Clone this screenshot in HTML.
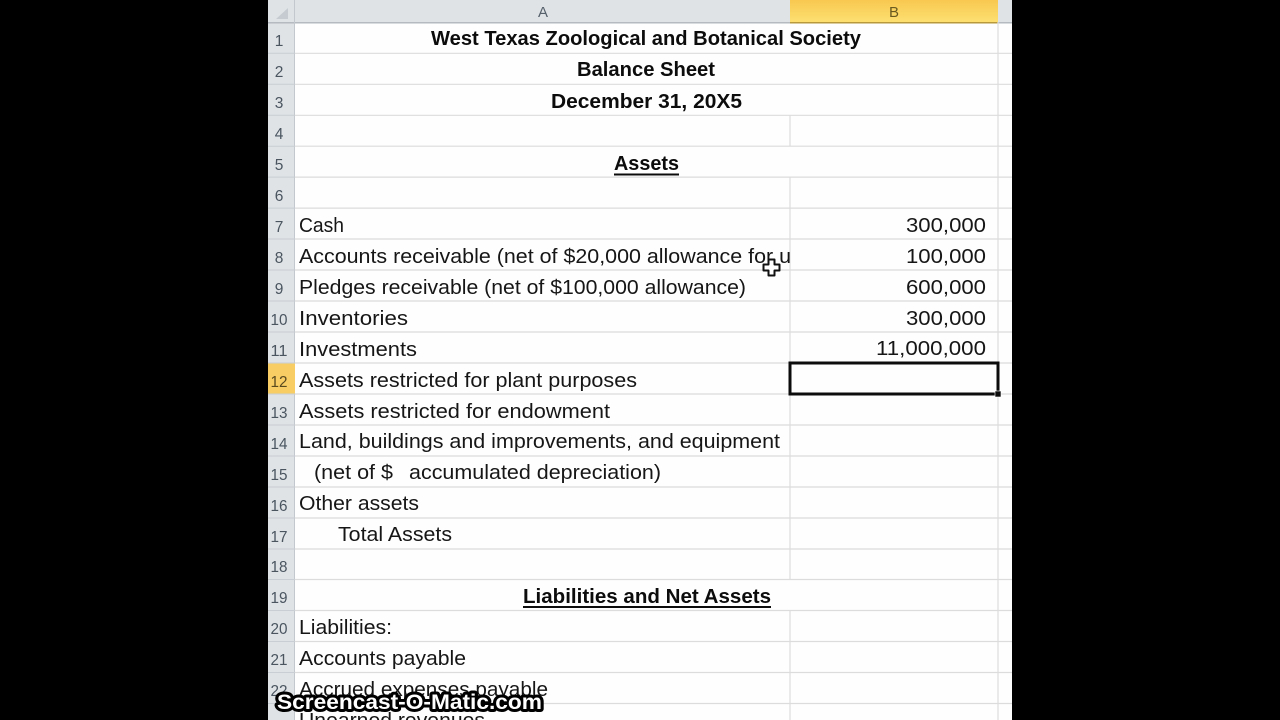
<!DOCTYPE html>
<html><head><meta charset="utf-8"><style>
html,body{margin:0;padding:0;background:#000;width:1280px;height:720px;overflow:hidden}
svg{display:block;position:absolute;left:0;top:0;filter:blur(.35px)}
text{font-family:"Liberation Sans",sans-serif}
.t{font-size:20.5px;fill:#161616}
.b{font-size:20.5px;font-weight:bold;fill:#0c0c0c}
.n{font-size:15.5px;fill:#4a5560;text-anchor:middle}
.h{font-size:15px;fill:#55606a;text-anchor:middle}
.g{stroke:#dcdcdc;stroke-width:1.2;fill:none}
</style></head><body>
<svg width="1280" height="720" viewBox="0 0 1280 720" xmlns="http://www.w3.org/2000/svg">
<defs>
<linearGradient id="y" x1="0" y1="0" x2="0" y2="1"><stop offset="0" stop-color="#f8c850"/><stop offset="1" stop-color="#fde071"/></linearGradient>
<clipPath id="c"><rect x="295" y="0" width="495" height="720"/></clipPath>
</defs>
<rect width="1280" height="720" fill="#000"/>
<rect x="268" y="0" width="744" height="720" fill="#fefefe"/>
<!-- headers -->
<rect x="268" y="0" width="744" height="22" fill="#dfe3e6"/>
<rect x="268" y="22" width="27" height="698" fill="#dfe3e6"/>
<rect x="790" y="0" width="208" height="22" fill="url(#y)"/>
<rect x="268" y="22" width="744" height="1.5" fill="#b4babf"/>
<rect x="790" y="22" width="208" height="1.5" fill="#b89a3c"/>
<polygon points="288,8 288,19 276,19" fill="#c5cbd0"/>
<rect x="294" y="0" width="1" height="720" fill="#c2c8cd"/>
<text class="h" x="543" y="17">A</text>
<text class="h" x="894" y="17" style="fill:#6a5a20">B</text>
<!-- row 12 header -->
<rect x="268" y="363" width="27" height="31" fill="#f8cd63"/>
<!-- horizontal gridlines -->
<g class="g">
<path d="M295 53.3H1012M295 84.3H1012M295 115.3H1012M295 146.2H1012M295 177.1H1012M295 208.1H1012M295 239H1012M295 270H1012M295 301H1012M295 332H1012M295 363H1012M295 394H1012M295 425H1012M295 456H1012M295 487H1012M295 518H1012M295 549H1012M295 579.5H1012M295 610.5H1012M295 641.5H1012M295 672.5H1012M295 703.5H1012"/>
<path d="M790 115.3V146M790 177.1V579.5M790 610.5V720M998 22V720"/>
</g>
<g stroke="#c8ced3" stroke-width="1">
<path d="M268 53.3H295M268 84.3H295M268 115.3H295M268 146.2H295M268 177.1H295M268 208.1H295M268 239H295M268 270H295M268 301H295M268 332H295M268 363H295M268 394H295M268 425H295M268 456H295M268 487H295M268 518H295M268 549H295M268 579.5H295M268 610.5H295M268 641.5H295M268 672.5H295M268 703.5H295"/>
</g>
<!-- row numbers -->
<text class="n" x="279" y="46">1</text>
<text class="n" x="279" y="77">2</text>
<text class="n" x="279" y="108">3</text>
<text class="n" x="279" y="139">4</text>
<text class="n" x="279" y="170">5</text>
<text class="n" x="279" y="201">6</text>
<text class="n" x="279" y="232">7</text>
<text class="n" x="279" y="263">8</text>
<text class="n" x="279" y="294">9</text>
<text class="n" x="279" y="325" textLength="17" lengthAdjust="spacingAndGlyphs">10</text>
<text class="n" x="279" y="356" textLength="17" lengthAdjust="spacingAndGlyphs">11</text>
<text class="n" x="279" y="387" textLength="17" lengthAdjust="spacingAndGlyphs" style="fill:#5a4a20">12</text>
<text class="n" x="279" y="418" textLength="17" lengthAdjust="spacingAndGlyphs">13</text>
<text class="n" x="279" y="449" textLength="17" lengthAdjust="spacingAndGlyphs">14</text>
<text class="n" x="279" y="480" textLength="17" lengthAdjust="spacingAndGlyphs">15</text>
<text class="n" x="279" y="511" textLength="17" lengthAdjust="spacingAndGlyphs">16</text>
<text class="n" x="279" y="542" textLength="17" lengthAdjust="spacingAndGlyphs">17</text>
<text class="n" x="279" y="572" textLength="17" lengthAdjust="spacingAndGlyphs">18</text>
<text class="n" x="279" y="603" textLength="17" lengthAdjust="spacingAndGlyphs">19</text>
<text class="n" x="279" y="634" textLength="17" lengthAdjust="spacingAndGlyphs">20</text>
<text class="n" x="279" y="665" textLength="17" lengthAdjust="spacingAndGlyphs">21</text>
<text class="n" x="279" y="696" textLength="17" lengthAdjust="spacingAndGlyphs">22</text>
<!-- centered bold -->
<text class="b" x="431" y="45" textLength="430" lengthAdjust="spacingAndGlyphs">West Texas Zoological and Botanical Society</text>
<text class="b" x="577" y="76" textLength="138" lengthAdjust="spacingAndGlyphs">Balance Sheet</text>
<text class="b" x="551" y="108" textLength="191" lengthAdjust="spacingAndGlyphs">December 31, 20X5</text>
<text class="b" x="614" y="170" textLength="65" lengthAdjust="spacingAndGlyphs">Assets</text>
<rect x="614" y="173.5" width="65" height="2" fill="#0c0c0c"/>
<text class="b" x="523" y="603" textLength="248" lengthAdjust="spacingAndGlyphs">Liabilities and Net Assets</text>
<rect x="523" y="606" width="248" height="2" fill="#0c0c0c"/>
<!-- column A -->
<g clip-path="url(#c)">
<text class="t" x="299" y="232" textLength="45" lengthAdjust="spacingAndGlyphs">Cash</text>
<text class="t" x="299" y="263" textLength="492" lengthAdjust="spacingAndGlyphs">Accounts receivable (net of $20,000 allowance for u</text>
<text class="t" x="299" y="294" textLength="447" lengthAdjust="spacingAndGlyphs">Pledges receivable (net of $100,000 allowance)</text>
<text class="t" x="299" y="325" textLength="109" lengthAdjust="spacingAndGlyphs">Inventories</text>
<text class="t" x="299" y="356" textLength="118" lengthAdjust="spacingAndGlyphs">Investments</text>
<text class="t" x="299" y="387" textLength="338" lengthAdjust="spacingAndGlyphs">Assets restricted for plant purposes</text>
<text class="t" x="299" y="418" textLength="311" lengthAdjust="spacingAndGlyphs">Assets restricted for endowment</text>
<text class="t" x="299" y="448" textLength="481" lengthAdjust="spacingAndGlyphs">Land, buildings and improvements, and equipment</text>
<text class="t" x="314" y="479" textLength="79" lengthAdjust="spacingAndGlyphs">(net of $</text>
<text class="t" x="409" y="479" textLength="252" lengthAdjust="spacingAndGlyphs">accumulated depreciation)</text>
<text class="t" x="299" y="510" textLength="120" lengthAdjust="spacingAndGlyphs">Other assets</text>
<text class="t" x="338" y="541" textLength="114" lengthAdjust="spacingAndGlyphs">Total Assets</text>
<text class="t" x="299" y="634" textLength="93" lengthAdjust="spacingAndGlyphs">Liabilities:</text>
<text class="t" x="299" y="665" textLength="167" lengthAdjust="spacingAndGlyphs">Accounts payable</text>
<text class="t" x="299" y="696" textLength="249" lengthAdjust="spacingAndGlyphs">Accrued expenses payable</text>
<text class="t" x="299" y="727" textLength="186" lengthAdjust="spacingAndGlyphs">Unearned revenues</text>
</g>
<!-- numbers -->
<text class="t" x="906" y="232" textLength="80" lengthAdjust="spacingAndGlyphs">300,000</text>
<text class="t" x="906" y="263" textLength="80" lengthAdjust="spacingAndGlyphs">100,000</text>
<text class="t" x="906" y="294" textLength="80" lengthAdjust="spacingAndGlyphs">600,000</text>
<text class="t" x="906" y="325" textLength="80" lengthAdjust="spacingAndGlyphs">300,000</text>
<text class="t" x="876" y="355" textLength="110" lengthAdjust="spacingAndGlyphs">11,000,000</text>
<!-- selection -->
<rect x="790" y="363" width="208" height="31" fill="#fefefe" stroke="#0c0c0c" stroke-width="3"/>
<rect x="995" y="391" width="6" height="6" fill="#0c0c0c" stroke="#fff" stroke-width="0.6"/>
<!-- cursor -->
<path d="M768.5 259.5h6v5h5v6h-5v5h-6v-5h-5v-6h5z" fill="#fff" stroke="#111" stroke-width="2" stroke-linejoin="round"/>
<!-- watermark -->
<text x="277" y="709" font-size="21.5" font-weight="bold" textLength="265" lengthAdjust="spacingAndGlyphs" fill="#fff" stroke="#000" stroke-width="6" stroke-linejoin="round" paint-order="stroke">Screencast-O-Matic.com</text>
</svg>
</body></html>
